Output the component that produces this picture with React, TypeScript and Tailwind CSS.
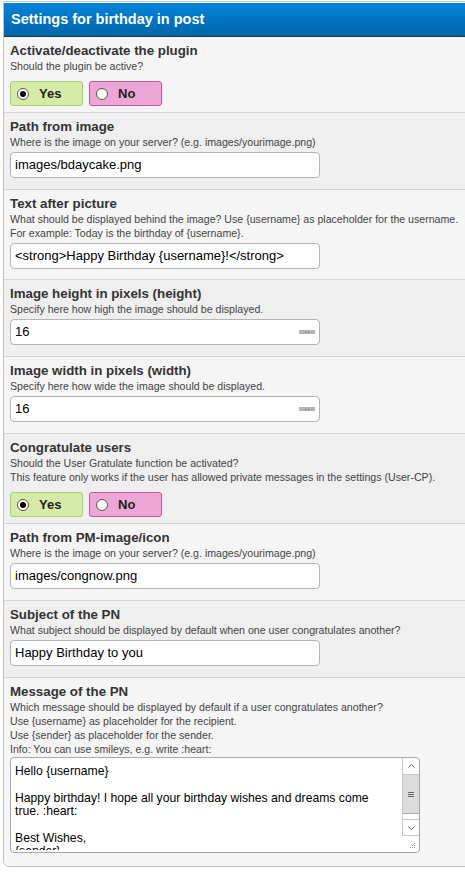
import React from "react";

const font = { fontFamily: '"Liberation Sans", Arial, sans-serif' };

type RowProps = {
  title: string;
  desc: string[];
  alt?: boolean;
  pb?: string;
  children?: React.ReactNode;
};

const Row = ({ title, desc, alt, pb = "pb-[11px]", children }: RowProps) => {
  const rowClasses = alt
    ? "border-b border-[#d4d4d4] bg-[#efefef] px-[6px] pt-[6px]"
    : "border-b border-[#d4d4d4] bg-[#f5f5f5] px-[6px] pt-[6px]";
  return (
    <div className={rowClasses + " " + pb}>
      <div className="text-[13.3px] font-bold leading-[16px] text-[#333]">{title}</div>
      {desc.map((line, i) => (
        <div key={i} className="whitespace-nowrap text-[10.6px] leading-[14px] text-[#444]">
          {line}
        </div>
      ))}
      {children}
    </div>
  );
};

const TextInput = ({ value, spinner }: { value: string; spinner?: boolean }) => (
  <div className="relative mt-[3px] flex h-[26px] w-[310px] items-center rounded-[4px] border border-[#b4b4b4] bg-white pl-[4px] text-[13px] text-black">
    {value}
    {spinner && (
      <div className="absolute right-[4px] top-[10px] flex h-[4px] w-[16px] items-center justify-center gap-[2px] bg-[#b4b4b4]">
        <span className="h-[1px] w-[1px] bg-[#666]" />
        <span className="h-[1px] w-[1px] bg-[#666]" />
      </div>
    )}
  </div>
);

const RadioPair = ({ yes }: { yes: boolean }) => (
  <div className="mt-[8px] flex gap-[6px]">
    <div className="flex h-[25px] w-[73px] items-center gap-[10px] rounded-[3px] border border-[#a6d26c] bg-[#d6eba7] pl-[6px]">
      <span className="flex h-[12px] w-[12px] items-center justify-center rounded-full border border-[#555] bg-white">
        {yes && <span className="h-[6px] w-[6px] rounded-full bg-black" />}
      </span>
      <span className="text-[13px] font-bold text-[#222]">Yes</span>
    </div>
    <div className="flex h-[25px] w-[73px] items-center gap-[10px] rounded-[3px] border border-[#d0519e] bg-[#eca7d6] pl-[6px]">
      <span className="flex h-[12px] w-[12px] items-center justify-center rounded-full border border-[#555] bg-white">
        {!yes && <span className="h-[6px] w-[6px] rounded-full bg-black" />}
      </span>
      <span className="text-[13px] font-bold text-[#222]">No</span>
    </div>
  </div>
);

const messageLines = [
  "Hello {username}",
  "",
  "Happy birthday! I hope all your birthday wishes and dreams come",
  "true. :heart:",
  "",
  "Best Wishes,",
  "{sender}",
];

const MessageBox = () => (
  <div className="mt-[1px] flex h-[96px] w-[410px] overflow-hidden rounded-[4px] border border-[#a8a8a8] bg-white">
    <div className="mb-[2px] flex-1 overflow-hidden pl-[4px] pt-[7px] text-[12.2px] leading-[13.4px] text-black">
      {messageLines.map((line, i) => (
        <div key={i} className="h-[13.4px] whitespace-pre">
          {line}
        </div>
      ))}
    </div>
    <div className="flex w-[17px] flex-col">
      <div className="flex flex-col border-l border-[#c8c8c8]">
        <div className="flex h-[17px] items-center justify-center border-b border-[#c8c8c8]">
          <svg width="7" height="4" viewBox="0 0 7 4">
            <path d="M0.5 3.5 L3.5 0.5 L6.5 3.5" fill="none" stroke="#666" strokeWidth="1" />
          </svg>
        </div>
        <div className="flex h-[39px] flex-col items-center justify-center gap-[1px] border-b border-[#aaa] bg-[#dcdcdc]">
          <span className="h-[1px] w-[6px] bg-[#666]" />
          <span className="h-[1px] w-[6px] bg-[#666]" />
          <span className="h-[1px] w-[6px] bg-[#666]" />
        </div>
        <div className="h-[5px]" />
        <div className="flex h-[17px] items-center justify-center border-y border-[#c8c8c8]">
          <svg width="7" height="4" viewBox="0 0 7 4">
            <path d="M0.5 0.5 L3.5 3.5 L6.5 0.5" fill="none" stroke="#666" strokeWidth="1" />
          </svg>
        </div>
      </div>
      <div className="flex flex-1 items-end justify-end pb-[3px] pr-[3px]">
        <svg width="6" height="6" viewBox="0 0 6 6">
          <rect x="4" y="0" width="1" height="1" fill="#999" />
          <rect x="2" y="2" width="1" height="1" fill="#999" />
          <rect x="4" y="2" width="1" height="1" fill="#999" />
          <rect x="0" y="4" width="1" height="1" fill="#999" />
          <rect x="2" y="4" width="1" height="1" fill="#999" />
          <rect x="4" y="4" width="1" height="1" fill="#999" />
        </svg>
      </div>
    </div>
  </div>
);

export default function App() {
  return (
    <div className="h-[872px] w-[465px] overflow-hidden bg-white pl-[3px] pt-[1px]" style={font}>
      <div className="w-[480px] overflow-hidden rounded-bl-[6px] border border-[#c4c4c4]">
        <div className="mt-[1px] flex h-[34px] items-center border-b border-[#0b3b55] bg-gradient-to-b from-[#0084db] to-[#0066a9] pl-[7px] text-[14.5px] font-bold text-white">
          Settings for birthday in post
        </div>
        <Row title="Activate/deactivate the plugin" desc={["Should the plugin be active?"]} pb="pb-[6px]">
          <RadioPair yes />
        </Row>
        <Row
          title="Path from image"
          desc={["Where is the image on your server? (e.g. images/yourimage.png)"]}
          alt
        >
          <TextInput value="images/bdaycake.png" />
        </Row>
        <Row
          title="Text after picture"
          desc={[
            "What should be displayed behind the image? Use {username} as placeholder for the username.",
            "For example: Today is the birthday of {username}.",
          ]}
          pb="pb-[10px]"
        >
          <TextInput value="<strong>Happy Birthday {username}!</strong>" />
        </Row>
        <Row
          title="Image height in pixels (height)"
          desc={["Specify here how high the image should be displayed."]}
          alt
        >
          <TextInput value="16" spinner />
        </Row>
        <Row
          title="Image width in pixels (width)"
          desc={["Specify here how wide the image should be displayed."]}
        >
          <TextInput value="16" spinner />
        </Row>
        <Row
          title="Congratulate users"
          desc={[
            "Should the User Gratulate function be activated?",
            "This feature only works if the user has allowed private messages in the settings (User-CP).",
          ]}
          alt
          pb="pb-[6px]"
        >
          <RadioPair yes />
        </Row>
        <Row
          title="Path from PM-image/icon"
          desc={["Where is the image on your server? (e.g. images/yourimage.png)"]}
        >
          <TextInput value="images/congnow.png" />
        </Row>
        <Row
          title="Subject of the PN"
          desc={["What subject should be displayed by default when one user congratulates another?"]}
          alt
        >
          <TextInput value="Happy Birthday to you" />
        </Row>
        <div className="bg-[#f5f5f5] px-[6px] pb-[13px] pt-[6px]">
          <div className="text-[13.3px] font-bold leading-[16px] text-[#333]">Message of the PN</div>
          {[
            "Which message should be displayed by default if a user congratulates another?",
            "Use {username} as placeholder for the recipient.",
            "Use {sender} as placeholder for the sender.",
            "Info: You can use smileys, e.g. write :heart:",
          ].map((line, i) => (
            <div key={i} className="whitespace-nowrap text-[10.6px] leading-[14px] text-[#444]">
              {line}
            </div>
          ))}
          <MessageBox />
        </div>
      </div>
    </div>
  );
}
